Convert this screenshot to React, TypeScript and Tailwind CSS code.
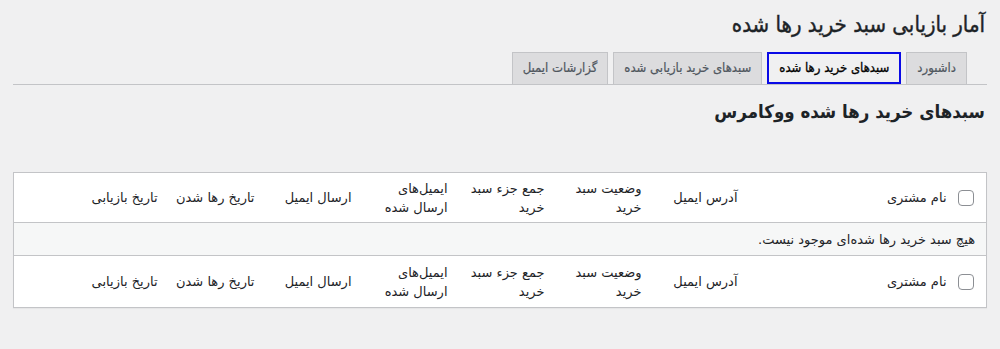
const columns = [
  { key: "name", label: ["نام مشتری"], width: "w-[209px]" },
  { key: "email", label: ["آدرس ایمیل"], width: "w-[96px]" },
  { key: "status", label: ["وضعیت سبد", "خرید"], width: "w-[97px]" },
  { key: "subtotal", label: ["جمع جزء سبد", "خرید"], width: "w-[97px]" },
  { key: "sent", label: ["ایمیل‌های", "ارسال شده"], width: "w-[96px]" },
  { key: "send", label: ["ارسال ایمیل"], width: "w-[97px]" },
  { key: "abandoned", label: ["تاریخ رها شدن"], width: "w-[97px]" },
  { key: "recovered", label: ["تاریخ بازیابی"], width: "" },
];

const tabs = [
  { label: "داشبورد", active: false },
  { label: "سبدهای خرید رها شده", active: true },
  { label: "سبدهای خرید بازیابی شده", active: false },
  { label: "گزارشات ایمیل", active: false },
];

function Checkbox() {
  return <span className="block h-4 w-4 rounded-[4px] border border-[#8c8f94] bg-white" />;
}

function HeaderRow({ footer }: { footer?: boolean }) {
  const row = footer ? "h-[52px] border-t border-[#c3c4c7]" : "h-[50px] border-b border-[#c3c4c7]";
  return (
    <tr className={row}>
      <td className="pr-[12px] align-middle">
        <Checkbox />
      </td>
      {columns.map((col) => (
        <th key={col.key} className="px-2 text-right align-middle text-[13px] font-normal leading-[19px] text-[#1d2327]">
          {col.label.map((line, i) => (
            <span key={i} className="block whitespace-nowrap">{line}</span>
          ))}
        </th>
      ))}
    </tr>
  );
}

export default function App() {
  return (
    <div dir="rtl" className="min-h-[349px] bg-[#f0f0f1] px-[13px] font-['DejaVu_Sans',sans-serif] text-[#1d2327]">
      <h1 className="pr-[2px] pt-[10px] font-['DejaVu_Sans_Condensed','DejaVu_Sans',sans-serif] text-[22px] font-normal leading-[29px] text-[#1d2327] [-webkit-text-stroke:0.4px_#1d2327]">
        آمار بازیابی سبد خرید رها شده
      </h1>

      <div className="mt-[13px] flex gap-[5px] border-b border-[#c3c4c7] pr-[20px] font-['DejaVu_Sans_Condensed','DejaVu_Sans',sans-serif]">
        {tabs.map((tab) =>
          tab.active ? (
            <span key={tab.label} className="-mb-px h-[32px] border-2 border-[#0a0ae6] bg-[#f0f0f1] px-[10px] text-[13px] leading-[28px] text-black [-webkit-text-stroke:0.3px_#000]">
              {tab.label}
            </span>
          ) : (
            <span key={tab.label} className="h-[32px] border border-b-0 border-[#c3c4c7] bg-[#dcdcde] px-[10px] text-[13px] leading-[30px] text-[#50575e] [-webkit-text-stroke:0.2px_#50575e]">
              {tab.label}
            </span>
          )
        )}
      </div>

      <h2 className="pr-[2px] pt-[12px] font-['DejaVu_Sans_Condensed','DejaVu_Sans',sans-serif] text-[18.5px] font-bold leading-[30px]">
        سبدهای خرید رها شده ووکامرس
      </h2>

      <table className="mt-[45px] w-full table-fixed border border-[#c3c4c7] bg-white shadow-[0_1px_1px_rgba(0,0,0,0.04)]">
        <colgroup>
          <col className="w-[32px]" />
          {columns.map((col) => (
            <col key={col.key} className={col.width} />
          ))}
        </colgroup>
        <thead>
          <HeaderRow />
        </thead>
        <tbody>
          <tr className="h-[33px] bg-[#f6f7f7]">
            <td colSpan={9} className="pr-[11px] text-right text-[13px] leading-[19px] text-[#1d2327]">
              هیچ سبد خرید رها شده‌ای موجود نیست.
            </td>
          </tr>
        </tbody>
        <tfoot>
          <HeaderRow footer />
        </tfoot>
      </table>
    </div>
  );
}
